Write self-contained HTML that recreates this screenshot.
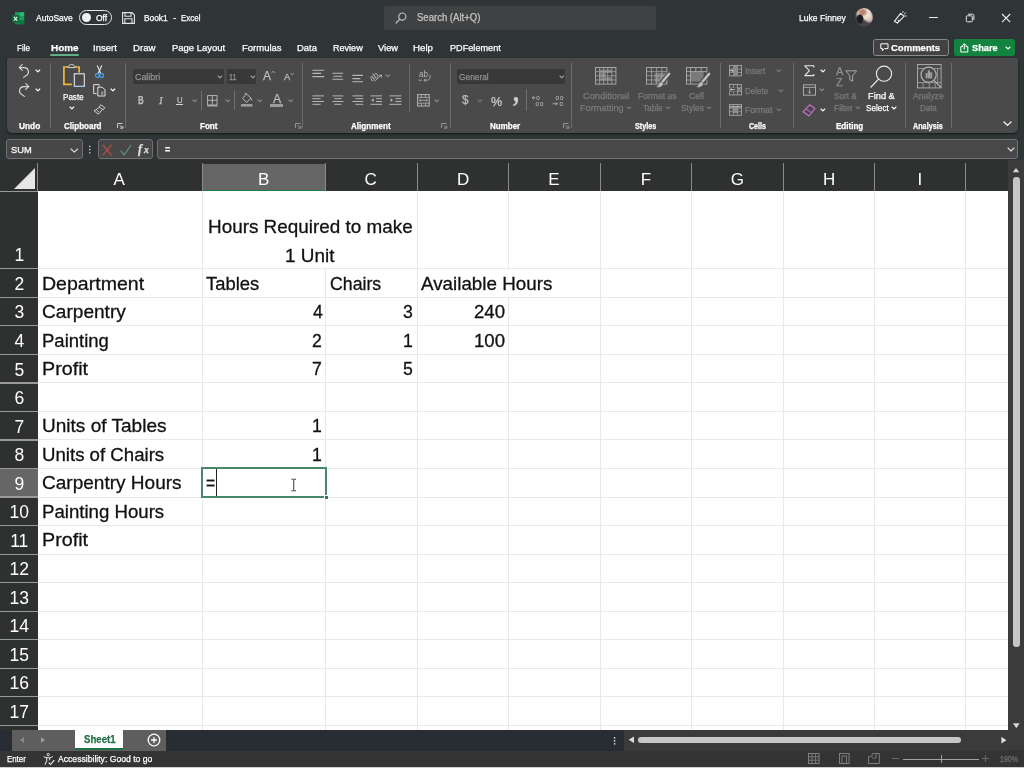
<!DOCTYPE html>
<html lang="en"><head><meta charset="utf-8"><title>Book1 - Excel</title>
<style>
html,body{margin:0;padding:0;}
body{width:1024px;height:768px;overflow:hidden;position:relative;background:#2f3436;font-family:"Liberation Sans",sans-serif;}
div,span.t,svg{position:absolute;box-sizing:border-box;}
span.t{will-change:opacity;white-space:nowrap;line-height:1;transform-origin:0 0;}
header span.t,nav span.t,section span.t,footer span.t{-webkit-text-stroke:0.25px currentColor;}
main span.c{-webkit-text-stroke:0.3px currentColor;}
svg{overflow:visible;}
</style></head><body>
<header id="titlebar"><svg style="left:11px;top:11.8px;" width="14" height="13" viewBox="0 0 14 13"><rect x="4" y="0.3" width="9.2" height="12" rx="0.8" fill="#16844a"/><rect x="8.6" y="0.3" width="4.6" height="4" fill="#33b877"/><rect x="8.6" y="4.3" width="4.6" height="4" fill="#1f9c5c"/><rect x="8.6" y="8.3" width="4.6" height="4" fill="#0f7a40"/><rect x="4" y="0.3" width="4.6" height="4" fill="#1f9c5c"/><rect x="1.2" y="3" width="7" height="7.4" rx="0.7" fill="#0e6e3a"/><path d="M3 4.8l3.2 3.8M6.2 4.8l-3.2 3.8" stroke="#e8f5ee" stroke-width="1.1"/></svg><span class="t" style="left:36.30px;top:14px;font-size:9.3px;color:#ffffff;transform:scaleX(0.9128);">AutoSave</span><div style="left:78.8px;top:10px;width:33.5px;height:14.8px;border:1.2px solid #e8e8e8;border-radius:7.4px;"></div><div style="left:81.6px;top:12.8px;width:9.2px;height:9.2px;background:#f2f2f2;border-radius:50%;"></div><span class="t" style="left:96.00px;top:14px;font-size:9px;color:#ffffff;transform:scaleX(0.9428);">Off</span><svg style="left:122px;top:12px;" width="13" height="12" viewBox="0 0 13 12"><path d="M0.6 0.6h9.4l2.4 2.2v8.6h-11.8z" fill="none" stroke="#e4e4e4" stroke-width="1.1"/><path d="M3 0.8v3.4h6v-3.4M2.8 11.2v-4.4h7.2v4.4" fill="none" stroke="#e4e4e4" stroke-width="1.1"/></svg><span class="t" style="left:143.80px;top:14px;font-size:9.3px;color:#ffffff;transform:scaleX(0.8989);">Book1</span><span class="t" style="left:172.70px;top:14px;font-size:9.3px;color:#ffffff;transform:scaleX(1.0592);">-</span><span class="t" style="left:181.00px;top:14px;font-size:9.3px;color:#ffffff;transform:scaleX(0.8576);">Excel</span><div style="left:383.8px;top:5.9px;width:272.4px;height:23.8px;background:#3f4142;border-radius:2px;"></div><svg style="left:395px;top:12px;" width="12" height="12" viewBox="0 0 12 12"><circle cx="7.3" cy="4.6" r="3.6" fill="none" stroke="#bdbdbd" stroke-width="1.2"/><path d="M4.7 7.2l-3.6 3.8" stroke="#bdbdbd" stroke-width="1.3" stroke-linecap="round"/></svg><span class="t" style="left:417.00px;top:13px;font-size:10px;color:#c4c4c4;transform:scaleX(0.9533);">Search (Alt+Q)</span><span class="t" style="left:799.20px;top:14px;font-size:9.3px;color:#ffffff;transform:scaleX(0.9253);">Luke Finney</span><div style="left:855px;top:8.2px;width:18px;height:18.6px;border-radius:50%;background:radial-gradient(ellipse 22% 28% at 28% 58%,#1d1d20 0 70%,rgba(29,29,32,0) 100%),radial-gradient(ellipse 30% 24% at 42% 22%,#b9826f 0 40%,rgba(185,130,111,0) 100%),radial-gradient(ellipse 52% 42% at 52% 28%,#eadfcd 0 62%,rgba(234,223,205,0) 100%),radial-gradient(ellipse 30% 30% at 78% 52%,#d8bcb4 0 50%,rgba(216,188,180,0) 100%),#4b414c;"></div><svg style="left:892.5px;top:11px;" width="14" height="13" viewBox="0 0 14 13"><path d="M1.4 10.4l6.2-8 3.6 2.8-6.6 6.6z" fill="none" stroke="#ececec" stroke-width="1.1" stroke-linejoin="round"/><path d="M3.2 11.4l1.4 0.9M9.6 1.6l0.5-1.1M11.4 2.8l1.2-0.9M12 5l1.4 0" fill="none" stroke="#ececec" stroke-width="0.9" stroke-linecap="round"/><circle cx="5.6" cy="9.6" r="0.8" fill="#ececec"/></svg><div style="left:929.3px;top:17px;width:9px;height:1px;background:#e8e8e8;"></div><svg style="left:965px;top:13px;" width="10" height="10" viewBox="0 0 10 10"><rect x="1.3" y="2.8" width="6" height="6" rx="1" fill="none" stroke="#e8e8e8" stroke-width="1"/><path d="M3 1.2h4.6a1.3 1.3 0 0 1 1.3 1.3v4.6" fill="none" stroke="#e8e8e8" stroke-width="1"/></svg><svg style="left:1001px;top:13px;" width="10" height="10" viewBox="0 0 10 10"><path d="M1 1l8.2 8.2M9.2 1l-8.2 8.2" stroke="#f0f0f0" stroke-width="1.1"/></svg></header>
<nav id="tabs"><span class="t" style="left:16.90px;top:44px;font-size:9.3px;color:#ffffff;transform:scaleX(0.8749);">File</span><span class="t" style="left:93.10px;top:44px;font-size:9.3px;color:#ffffff;transform:scaleX(1.0237);">Insert</span><span class="t" style="left:132.70px;top:44px;font-size:9.3px;color:#ffffff;transform:scaleX(1.0361);">Draw</span><span class="t" style="left:171.80px;top:44px;font-size:9.3px;color:#ffffff;transform:scaleX(1.0188);">Page Layout</span><span class="t" style="left:241.50px;top:44px;font-size:9.3px;color:#ffffff;transform:scaleX(1.0211);">Formulas</span><span class="t" style="left:296.80px;top:44px;font-size:9.3px;color:#ffffff;transform:scaleX(1.0117);">Data</span><span class="t" style="left:333.00px;top:44px;font-size:9.3px;color:#ffffff;transform:scaleX(0.9736);">Review</span><span class="t" style="left:377.80px;top:44px;font-size:9.3px;color:#ffffff;transform:scaleX(1.0053);">View</span><span class="t" style="left:413.10px;top:44px;font-size:9.3px;color:#ffffff;transform:scaleX(1.0413);">Help</span><span class="t" style="left:449.60px;top:44px;font-size:9.3px;color:#ffffff;transform:scaleX(0.9824);">PDFelement</span><span class="t" style="left:50.60px;top:44px;font-size:9.3px;color:#ffffff;transform:scaleX(1.0637);font-weight:bold;">Home</span><div style="left:50px;top:54.3px;width:28.8px;height:1.4px;background:#5fae88;border-radius:1px;"></div><div style="left:873px;top:38.7px;width:75.5px;height:17.6px;background:#424242;border:1px solid #8a8a8a;border-radius:2.5px;"></div><svg style="left:879.5px;top:43px;" width="9" height="9" viewBox="0 0 9 9"><path d="M0.8 0.8h7.2v4.8h-3.6l-2 2v-2h-1.6z" fill="none" stroke="#fff" stroke-width="1" stroke-linejoin="round"/></svg><span class="t" style="left:891.30px;top:44px;font-size:9.3px;color:#ffffff;transform:scaleX(1.0233);font-weight:bold;">Comments</span><div style="left:953.9px;top:38.7px;width:61.6px;height:17.6px;background:#12843f;border-radius:2.5px;"></div><svg style="left:959.5px;top:42.5px;" width="9" height="10" viewBox="0 0 9 10"><path d="M2.6 3.6h-1.8v5.4h7v-5.4h-1.8M4.3 6.2v-5.2M2.4 2.6l1.9-1.9 1.9 1.9" fill="none" stroke="#fff" stroke-width="1" stroke-linejoin="round" stroke-linecap="round"/></svg><span class="t" style="left:972.00px;top:44px;font-size:9.3px;color:#ffffff;transform:scaleX(0.9940);font-weight:bold;">Share</span><svg style="left:1005.0px;top:45.6px;" width="6" height="4" viewBox="0 0 6 4"><path d="M1 1l2.0 2 2.0 -2" fill="none" stroke="#ffffff" stroke-width="1.1" stroke-linecap="round" stroke-linejoin="round"/></svg></nav>
<section id="ribbon"><div style="left:7px;top:58.2px;width:1011px;height:74.4px;background:#4a4a4a;border-radius:2px 2px 5px 5px;box-shadow:0 1px 2px rgba(0,0,0,0.55);"></div><div style="left:50.1px;top:63px;width:1px;height:65px;background:#6c6c6c;"></div><div style="left:124.9px;top:63px;width:1px;height:65px;background:#6c6c6c;"></div><div style="left:302.0px;top:63px;width:1px;height:65px;background:#6c6c6c;"></div><div style="left:449.8px;top:63px;width:1px;height:65px;background:#6c6c6c;"></div><div style="left:571.1px;top:63px;width:1px;height:65px;background:#6c6c6c;"></div><div style="left:719.5px;top:63px;width:1px;height:65px;background:#6c6c6c;"></div><div style="left:793.2px;top:63px;width:1px;height:65px;background:#6c6c6c;"></div><div style="left:904.9px;top:63px;width:1px;height:65px;background:#6c6c6c;"></div><div style="left:950.7px;top:63px;width:1px;height:65px;background:#6c6c6c;"></div><svg style="left:18px;top:63.6px;" width="12" height="14" viewBox="0 0 12 14"><path d="M1.2 3.6h5.2a4.2 4.2 0 0 1 2.6 7.4l-3.4 2.4M1.2 3.6l3-3M1.2 3.6l3.2 2.8" fill="none" stroke="#d6d6d6" stroke-width="1.15" stroke-linecap="round" stroke-linejoin="round"/></svg><svg style="left:18px;top:83.4px;" width="12" height="14" viewBox="0 0 12 14"><g transform="translate(12,0) scale(-1,1)"><path d="M1.2 3.6h5.2a4.2 4.2 0 0 1 2.6 7.4l-3.4 2.4M1.2 3.6l3-3M1.2 3.6l3.2 2.8" fill="none" stroke="#d6d6d6" stroke-width="1.15" stroke-linecap="round" stroke-linejoin="round"/></g></svg><svg style="left:34.9px;top:68.64999999999999px;" width="5.8" height="3.9" viewBox="0 0 5.8 3.9"><path d="M1 1l1.9 1.9 1.9 -1.9" fill="none" stroke="#ffffff" stroke-width="1.1" stroke-linecap="round" stroke-linejoin="round"/></svg><svg style="left:34.9px;top:88.05px;" width="5.8" height="3.9" viewBox="0 0 5.8 3.9"><path d="M1 1l1.9 1.9 1.9 -1.9" fill="none" stroke="#ffffff" stroke-width="1.1" stroke-linecap="round" stroke-linejoin="round"/></svg><span class="t" style="left:19.00px;top:122px;font-size:8.3px;color:#ffffff;transform:scaleX(1.0021);font-weight:bold;">Undo</span><svg style="left:63.2px;top:64.3px;" width="23" height="24" viewBox="0 0 23 24"><path d="M5.5 3h-4.6v17.3h8" fill="none" stroke="#f0b63c" stroke-width="1.7"/><path d="M11.5 3h4.6v5.5" fill="none" stroke="#f0b63c" stroke-width="1.7"/><path d="M5.2 3.6c0-2 1.6-3 3.4-3s3.4 1 3.4 3z" fill="none" stroke="#d8d8d8" stroke-width="1"/><rect x="11.3" y="9.8" width="10" height="12.6" fill="#4a4a4a" stroke="#e6e6e6" stroke-width="1.1"/><path d="M11.3 22.4h10" stroke="#9cc3e6" stroke-width="1.1"/></svg><span class="t" style="left:62.50px;top:93px;font-size:9.3px;color:#ffffff;transform:scaleX(0.8669);">Paste</span><svg style="left:69.3px;top:106.05px;" width="5.8" height="3.9" viewBox="0 0 5.8 3.9"><path d="M1 1l1.9 1.9 1.9 -1.9" fill="none" stroke="#ffffff" stroke-width="1.1" stroke-linecap="round" stroke-linejoin="round"/></svg><svg style="left:95px;top:64.5px;" width="9" height="13" viewBox="0 0 9 13"><path d="M2.2 0.6l3.6 8M6.8 0.6l-3.6 8" stroke="#e6e6e6" stroke-width="1.1" fill="none"/><circle cx="2.4" cy="10.4" r="1.9" fill="none" stroke="#4f9be0" stroke-width="1.3"/><circle cx="6.6" cy="10.4" r="1.9" fill="none" stroke="#4f9be0" stroke-width="1.3"/></svg><svg style="left:92.5px;top:84px;" width="13" height="13" viewBox="0 0 13 13"><path d="M3.6 9.6h-2.9v-9h5.4v1.8" fill="none" stroke="#e0e0e0" stroke-width="1"/><path d="M4.8 3.2h4.6l2.6 2.6v6.2h-7.2z" fill="none" stroke="#e0e0e0" stroke-width="1"/><path d="M8 8.2h2.4M8 10h2.4" stroke="#e0e0e0" stroke-width="0.8"/></svg><svg style="left:109.89999999999999px;top:88.05px;" width="5.8" height="3.9" viewBox="0 0 5.8 3.9"><path d="M1 1l1.9 1.9 1.9 -1.9" fill="none" stroke="#ffffff" stroke-width="1.1" stroke-linecap="round" stroke-linejoin="round"/></svg><svg style="left:93px;top:104px;" width="13" height="11" viewBox="0 0 13 11"><path d="M7.6 0.8l4.2 2.8-1.6 2.2-4.2-2.8z M6.6 3.4l-5.6 3.4 4.4 3.4 4-4.6" fill="none" stroke="#cfcfcf" stroke-width="1" stroke-linejoin="round"/><path d="M3.4 6l3 2.2" stroke="#cfcfcf" stroke-width="0.8"/></svg><span class="t" style="left:63.50px;top:122px;font-size:8.3px;color:#ffffff;transform:scaleX(0.9685);font-weight:bold;">Clipboard</span><svg style="left:116.8px;top:123px;" width="7" height="6" viewBox="0 0 7 6"><path d="M0.5 0.5h5M0.5 0.5v4.5" fill="none" stroke="#d6d6d6" stroke-width="0.9"/><path d="M2.6 2.4l3 2.6M5.8 2.8v2.4h-2.6" fill="none" stroke="#d6d6d6" stroke-width="0.9"/></svg><div style="left:132.5px;top:69px;width:91.3px;height:15.2px;background:#383838;border-radius:2px;"></div><span class="t" style="left:134.80px;top:72px;font-size:9.5px;color:#929292;transform:scaleX(0.9357);">Calibri</span><svg style="left:216.7px;top:74.85px;" width="5.8" height="3.9" viewBox="0 0 5.8 3.9"><path d="M1 1l1.9 1.9 1.9 -1.9" fill="none" stroke="#9c9c9c" stroke-width="1.1" stroke-linecap="round" stroke-linejoin="round"/></svg><div style="left:226.9px;top:69px;width:29.4px;height:15.2px;background:#383838;border-radius:2px;"></div><span class="t" style="left:229.00px;top:72px;font-size:9.5px;color:#929292;transform:scaleX(0.7692);">11</span><svg style="left:249.5px;top:74.85px;" width="5.8" height="3.9" viewBox="0 0 5.8 3.9"><path d="M1 1l1.9 1.9 1.9 -1.9" fill="none" stroke="#9c9c9c" stroke-width="1.1" stroke-linecap="round" stroke-linejoin="round"/></svg><span class="t" style="left:263.10px;top:70px;font-size:12.6px;color:#bdbdbd;transform:scaleX(0.9595);">A</span><svg style="left:271px;top:69.5px;" width="5" height="4" viewBox="0 0 5 4"><path d="M0.6 3l1.6-2 1.6 2" fill="none" stroke="#aaa" stroke-width="0.8"/></svg><span class="t" style="left:283.80px;top:72px;font-size:9.8px;color:#bdbdbd;transform:scaleX(0.9443);">A</span><svg style="left:289.6px;top:71.5px;" width="5" height="4" viewBox="0 0 5 4"><path d="M0.6 1l1.6 2 1.6-2" fill="none" stroke="#aaa" stroke-width="0.8"/></svg><span class="t" style="left:138.10px;top:96px;font-size:10.4px;color:#bdbdbd;transform:scaleX(0.7612);font-weight:bold;">B</span><span class="t" style="left:158.66px;top:96px;font-size:10.6px;color:#bdbdbd;transform:scaleX(1.0427);font-style:italic;font-family:'Liberation Serif',serif;">I</span><span class="t" style="left:176.60px;top:95px;font-size:9.6px;color:#bdbdbd;transform:scaleX(0.8102);">U</span><div style="left:176.2px;top:104.3px;width:6.4px;height:0.9px;background:#d6d6d6;"></div><svg style="left:191.6px;top:98.75px;" width="5.6" height="3.7" viewBox="0 0 5.6 3.7"><path d="M1 1l1.8 1.7 1.8 -1.7" fill="none" stroke="#8e8e8e" stroke-width="1.1" stroke-linecap="round" stroke-linejoin="round"/></svg><div style="left:201px;top:91px;width:1px;height:18.6px;background:#707070;"></div><svg style="left:207.3px;top:94.5px;" width="11" height="12" viewBox="0 0 11 12"><rect x="0.6" y="0.6" width="9.4" height="9.4" fill="none" stroke="#bdbdbd" stroke-width="0.9"/><path d="M5.3 0.6v9.4M0.6 5.3h9.4" stroke="#bdbdbd" stroke-width="0.9"/><path d="M0.2 10.9h10.2" stroke="#c4c4c4" stroke-width="1"/></svg><svg style="left:224.7px;top:98.75px;" width="5.6" height="3.7" viewBox="0 0 5.6 3.7"><path d="M1 1l1.8 1.7 1.8 -1.7" fill="none" stroke="#8e8e8e" stroke-width="1.1" stroke-linecap="round" stroke-linejoin="round"/></svg><div style="left:233.9px;top:91px;width:1px;height:18.6px;background:#707070;"></div><svg style="left:240.5px;top:93px;" width="12" height="14" viewBox="0 0 12 14"><path d="M5.4 0.8l4.6 4.4-4.4 4.2-4-4z M5.4 0.8l-1.6-0.4M10 5.2l1 2.2" fill="none" stroke="#bcbcbc" stroke-width="1" stroke-linejoin="round"/><rect x="0" y="11" width="11.4" height="2.6" fill="#9c9c9c"/></svg><svg style="left:257.2px;top:98.75px;" width="5.6" height="3.7" viewBox="0 0 5.6 3.7"><path d="M1 1l1.8 1.7 1.8 -1.7" fill="none" stroke="#8e8e8e" stroke-width="1.1" stroke-linecap="round" stroke-linejoin="round"/></svg><span class="t" style="left:272.80px;top:93px;font-size:12px;color:#bdbdbd;transform:scaleX(1.0199);">A</span><div style="left:270px;top:104px;width:12.5px;height:2.6px;background:#9c9c9c;"></div><svg style="left:288.2px;top:98.75px;" width="5.6" height="3.7" viewBox="0 0 5.6 3.7"><path d="M1 1l1.8 1.7 1.8 -1.7" fill="none" stroke="#8e8e8e" stroke-width="1.1" stroke-linecap="round" stroke-linejoin="round"/></svg><span class="t" style="left:200.00px;top:122px;font-size:8.3px;color:#ffffff;transform:scaleX(0.9739);font-weight:bold;">Font</span><svg style="left:294.5px;top:122.5px;" width="7" height="6" viewBox="0 0 7 6"><path d="M0.5 0.5h5M0.5 0.5v4.5" fill="none" stroke="#9a9a9a" stroke-width="0.9"/><path d="M2.6 2.4l3 2.6M5.8 2.8v2.4h-2.6" fill="none" stroke="#9a9a9a" stroke-width="0.9"/></svg><svg style="left:311.5px;top:69px;" width="13" height="10" viewBox="0 0 13 10"><path d="M0.4 1.2H12.2M0.4 4.4H9.2M0.4 7.6H12.2" stroke="#b6b6b6" stroke-width="1.1" fill="none"/></svg><svg style="left:331.5px;top:71.6px;" width="12" height="9" viewBox="0 0 12 9"><path d="M0.4 1.2H11.2M1.4 4.2H10.2M0.4 7.2H11.2" stroke="#b6b6b6" stroke-width="1.1" fill="none"/></svg><svg style="left:351.5px;top:74.2px;" width="12" height="10" viewBox="0 0 12 10"><path d="M0.4 1.4H11M0.4 4.6H8.4M0.4 7.8H11" stroke="#b6b6b6" stroke-width="1.1" fill="none"/></svg><svg style="left:369px;top:69.5px;" width="15" height="12" viewBox="0 0 15 12"><text x="0.5" y="9.2" font-size="8.4" fill="#b8b8b8" font-family="Liberation Sans,sans-serif" transform="rotate(-38 5 7)">ab</text><path d="M5.4 11.4l7-6.4M12.6 5l-2.8 0.4M12.6 5l-0.4 2.6" stroke="#b8b8b8" stroke-width="0.9" fill="none"/></svg><svg style="left:385.2px;top:74.35000000000001px;" width="5.6" height="3.7" viewBox="0 0 5.6 3.7"><path d="M1 1l1.8 1.7 1.8 -1.7" fill="none" stroke="#8e8e8e" stroke-width="1.1" stroke-linecap="round" stroke-linejoin="round"/></svg><svg style="left:311.5px;top:95px;" width="13" height="11" viewBox="0 0 13 11"><path d="M0.4 0.9H12M0.4 3.7H8.6M0.4 6.5H12M0.4 9.3H8.6" stroke="#b6b6b6" stroke-width="1" fill="none"/></svg><svg style="left:331.5px;top:95px;" width="12" height="11" viewBox="0 0 12 11"><path d="M0.4 0.9H11.4M2.2 3.7H9.6M0.4 6.5H11.4M2.2 9.3H9.6" stroke="#b6b6b6" stroke-width="1" fill="none"/></svg><svg style="left:351.5px;top:95px;" width="12" height="11" viewBox="0 0 12 11"><path d="M0.4 0.9H11.2M3.4 3.7H11.2M0.4 6.5H11.2M3.4 9.3H11.2" stroke="#b6b6b6" stroke-width="1" fill="none"/></svg><svg style="left:369.6px;top:95px;" width="13" height="11" viewBox="0 0 13 11"><path d="M0.4 0.9H12M6 3.7H12M6 6.5H12M0.4 9.3H12" stroke="#b6b6b6" stroke-width="1" fill="none"/><path d="M3.6 3.2l-2.4 1.9 2.4 1.9z" fill="#bdbdbd"/></svg><svg style="left:389.2px;top:95px;" width="13" height="11" viewBox="0 0 13 11"><path d="M0.4 0.9H12.4M6.4 3.7H12.4M6.4 6.5H12.4M0.4 9.3H12.4" stroke="#b6b6b6" stroke-width="1" fill="none"/><path d="M1.6 3.2l2.4 1.9-2.4 1.9z" fill="#bdbdbd"/></svg><div style="left:409.1px;top:64px;width:1px;height:47.6px;background:#6c6c6c;"></div><svg style="left:418px;top:70px;" width="13" height="12" viewBox="0 0 13 12"><text x="1" y="7.2" font-size="8.2" fill="#b8b8b8" font-family="Liberation Sans,sans-serif">ab</text><path d="M0.6 10.2h3M11.4 4.6c1.6 2.6 0.4 5.6-3 5.6h-2.2M7.6 8.6l-1.6 1.6 1.6 1.6" stroke="#b8b8b8" stroke-width="0.9" fill="none"/></svg><svg style="left:416.6px;top:94px;" width="13" height="13" viewBox="0 0 13 13"><rect x="0.6" y="0.6" width="11.6" height="11.4" fill="none" stroke="#b4b4b4" stroke-width="1"/><path d="M0.6 3.4h11.6M0.6 9.2h11.6M4.4 0.6v2.8M8.4 0.6v2.8M4.4 9.2v2.8M8.4 9.2v2.8" stroke="#b4b4b4" stroke-width="0.8"/><path d="M2.4 6.3h8M4 4.9l-1.6 1.4 1.6 1.4M8.8 4.9l1.6 1.4-1.6 1.4" stroke="#b4b4b4" stroke-width="0.8" fill="none"/></svg><svg style="left:434.4px;top:98.75px;" width="5.6" height="3.7" viewBox="0 0 5.6 3.7"><path d="M1 1l1.8 1.7 1.8 -1.7" fill="none" stroke="#8e8e8e" stroke-width="1.1" stroke-linecap="round" stroke-linejoin="round"/></svg><span class="t" style="left:351.00px;top:122px;font-size:8.3px;color:#ffffff;transform:scaleX(0.9757);font-weight:bold;">Alignment</span><svg style="left:441px;top:123px;" width="7" height="6" viewBox="0 0 7 6"><path d="M0.5 0.5h5M0.5 0.5v4.5" fill="none" stroke="#9a9a9a" stroke-width="0.9"/><path d="M2.6 2.4l3 2.6M5.8 2.8v2.4h-2.6" fill="none" stroke="#9a9a9a" stroke-width="0.9"/></svg><div style="left:456.6px;top:68.6px;width:108.2px;height:15.5px;background:#383838;border-radius:2px;"></div><span class="t" style="left:458.50px;top:72px;font-size:9.5px;color:#929292;transform:scaleX(0.8782);">General</span><svg style="left:558.6px;top:74.89999999999999px;" width="5.6" height="3.8" viewBox="0 0 5.6 3.8"><path d="M1 1l1.8 1.8 1.8 -1.8" fill="none" stroke="#9c9c9c" stroke-width="1.1" stroke-linecap="round" stroke-linejoin="round"/></svg><span class="t" style="left:462.00px;top:94px;font-size:12.4px;color:#bcbcbc;transform:scaleX(0.9445);">$</span><svg style="left:476.59999999999997px;top:98.75px;" width="5.6" height="3.7" viewBox="0 0 5.6 3.7"><path d="M1 1l1.8 1.7 1.8 -1.7" fill="none" stroke="#7c7c7c" stroke-width="1.1" stroke-linecap="round" stroke-linejoin="round"/></svg><span class="t" style="left:491.00px;top:95px;font-size:13.6px;color:#cfcfcf;transform:scaleX(0.9253);">%</span><span class="t" style="left:513.00px;top:77px;font-size:29px;color:#cfcfcf;transform:scaleX(0.8276);font-weight:bold;font-family:'Liberation Serif',serif;">,</span><div style="left:525.5px;top:89px;width:1px;height:22px;background:#707070;"></div><svg style="left:531.5px;top:94.5px;" width="13" height="12" viewBox="0 0 13 12"><text x="4.2" y="5.4" font-size="6.2" fill="#c6c6c6" font-family="Liberation Sans,sans-serif">0</text><text x="3.4" y="11.4" font-size="6.2" fill="#c6c6c6" font-family="Liberation Sans,sans-serif" textLength="8">00</text><path d="M0.4 2.8h3M1.6 1.4l-1.4 1.4 1.4 1.4" stroke="#c6c6c6" stroke-width="0.8" fill="none"/></svg><svg style="left:552px;top:94.5px;" width="13" height="12" viewBox="0 0 13 12"><text x="3.4" y="5.4" font-size="6.2" fill="#c6c6c6" font-family="Liberation Sans,sans-serif" textLength="8">00</text><text x="7.4" y="11.4" font-size="6.2" fill="#c6c6c6" font-family="Liberation Sans,sans-serif">0</text><path d="M0.6 8.8h4.6M3.8 7.4l1.4 1.4-1.4 1.4" stroke="#c6c6c6" stroke-width="0.8" fill="none"/></svg><span class="t" style="left:489.80px;top:122px;font-size:8.3px;color:#ffffff;transform:scaleX(0.9626);font-weight:bold;">Number</span><svg style="left:562.8px;top:123px;" width="7" height="6" viewBox="0 0 7 6"><path d="M0.5 0.5h5M0.5 0.5v4.5" fill="none" stroke="#9a9a9a" stroke-width="0.9"/><path d="M2.6 2.4l3 2.6M5.8 2.8v2.4h-2.6" fill="none" stroke="#9a9a9a" stroke-width="0.9"/></svg><svg style="left:595.2px;top:66.8px;" width="22" height="18" viewBox="0 0 22 18"><rect x="4.5" y="2.6" width="12" height="11" fill="#7a7a7a"/><rect x="11" y="6" width="5" height="4" fill="#3c3c3c"/><rect x="0.5" y="0.5" width="20.4" height="16.6" fill="none" stroke="#a6a6a6" stroke-width="1"/><path d="M4.58 0.5v16.6" stroke="#a6a6a6" stroke-width="0.8"/><path d="M8.66 0.5v16.6" stroke="#a6a6a6" stroke-width="0.8"/><path d="M12.74 0.5v16.6" stroke="#a6a6a6" stroke-width="0.8"/><path d="M16.82 0.5v16.6" stroke="#a6a6a6" stroke-width="0.8"/><path d="M0.5 4.65h20.4" stroke="#a6a6a6" stroke-width="0.8"/><path d="M0.5 8.80h20.4" stroke="#a6a6a6" stroke-width="0.8"/><path d="M0.5 12.95h20.4" stroke="#a6a6a6" stroke-width="0.8"/></svg><svg style="left:645.5px;top:66.8px;" width="25" height="22" viewBox="0 0 25 22"><rect x="8.6" y="6" width="12" height="9.6" fill="#7a7a7a"/><rect x="0.5" y="0.5" width="20.4" height="16.6" fill="none" stroke="#a6a6a6" stroke-width="1"/><path d="M5.60 0.5v16.6" stroke="#a6a6a6" stroke-width="0.8"/><path d="M10.70 0.5v16.6" stroke="#a6a6a6" stroke-width="0.8"/><path d="M15.80 0.5v16.6" stroke="#a6a6a6" stroke-width="0.8"/><path d="M0.5 4.65h20.4" stroke="#a6a6a6" stroke-width="0.8"/><path d="M0.5 8.80h20.4" stroke="#a6a6a6" stroke-width="0.8"/><path d="M0.5 12.95h20.4" stroke="#a6a6a6" stroke-width="0.8"/><path d="M23.4 6.6l-8 9.4" stroke="#4a4a4a" stroke-width="4.6" stroke-linecap="round"/><path d="M23.2 6.8l-7.6 9" stroke="#c4c4c4" stroke-width="2.4" stroke-linecap="round"/><path d="M15.8 14.6c-2.6 0.2-3.2 2.2-3.6 3.4-0.4 1-1.4 1.6-2.6 1.8 2.4 1.2 6.4 0.8 7.6-2.2 0.4-1.2-0.2-2.4-1.4-3z" fill="#bcbcbc" stroke="#4a4a4a" stroke-width="0.6"/></svg><svg style="left:686px;top:66.8px;" width="25" height="22" viewBox="0 0 25 22"><rect x="4.6" y="4.6" width="13" height="10" fill="#7a7a7a"/><rect x="0.5" y="0.5" width="20.4" height="16.6" fill="none" stroke="#a6a6a6" stroke-width="1"/><path d="M0.5 4.6h20.4M4.6 0.5v16.6M0.5 8.8h4M0.5 13h4M9.8 0.5v4M15.2 0.5v4" stroke="#b4b4b4" stroke-width="0.8"/><path d="M23.4 6.6l-8 9.4" stroke="#4a4a4a" stroke-width="4.6" stroke-linecap="round"/><path d="M23.2 6.8l-7.6 9" stroke="#c4c4c4" stroke-width="2.4" stroke-linecap="round"/><path d="M15.8 14.6c-2.6 0.2-3.2 2.2-3.6 3.4-0.4 1-1.4 1.6-2.6 1.8 2.4 1.2 6.4 0.8 7.6-2.2 0.4-1.2-0.2-2.4-1.4-3z" fill="#bcbcbc" stroke="#4a4a4a" stroke-width="0.6"/></svg><span class="t" style="left:582.90px;top:92px;font-size:9.2px;color:#7b7b7b;transform:scaleX(1.0077);">Conditional</span><span class="t" style="left:579.80px;top:104px;font-size:9.2px;color:#7b7b7b;transform:scaleX(0.9937);">Formatting</span><svg style="left:626.2px;top:106.05000000000001px;" width="5.6" height="3.7" viewBox="0 0 5.6 3.7"><path d="M1 1l1.8 1.7 1.8 -1.7" fill="none" stroke="#7b7b7b" stroke-width="1.1" stroke-linecap="round" stroke-linejoin="round"/></svg><span class="t" style="left:637.50px;top:92px;font-size:9.2px;color:#7b7b7b;transform:scaleX(0.9300);">Format as</span><span class="t" style="left:643.30px;top:104px;font-size:9.2px;color:#7b7b7b;transform:scaleX(0.8914);">Table</span><svg style="left:664.8000000000001px;top:106.05000000000001px;" width="5.6" height="3.7" viewBox="0 0 5.6 3.7"><path d="M1 1l1.8 1.7 1.8 -1.7" fill="none" stroke="#7b7b7b" stroke-width="1.1" stroke-linecap="round" stroke-linejoin="round"/></svg><span class="t" style="left:689.40px;top:92px;font-size:9.2px;color:#7b7b7b;transform:scaleX(0.9389);">Cell</span><span class="t" style="left:680.80px;top:104px;font-size:9.2px;color:#7b7b7b;transform:scaleX(0.9174);">Styles</span><svg style="left:705.8000000000001px;top:106.05000000000001px;" width="5.6" height="3.7" viewBox="0 0 5.6 3.7"><path d="M1 1l1.8 1.7 1.8 -1.7" fill="none" stroke="#7b7b7b" stroke-width="1.1" stroke-linecap="round" stroke-linejoin="round"/></svg><span class="t" style="left:635.00px;top:122px;font-size:8.3px;color:#ffffff;transform:scaleX(0.8714);font-weight:bold;">Styles</span><svg style="left:729px;top:64.8px;" width="14" height="12" viewBox="0 0 14 12"><rect x="0.5" y="0.5" width="12" height="10.4" fill="none" stroke="#9c9c9c" stroke-width="1"/><path d="M4.50 0.5v10.4" stroke="#9c9c9c" stroke-width="0.8"/><path d="M8.50 0.5v10.4" stroke="#9c9c9c" stroke-width="0.8"/><path d="M0.5 3.97h12" stroke="#9c9c9c" stroke-width="0.8"/><path d="M0.5 7.43h12" stroke="#9c9c9c" stroke-width="0.8"/><rect x="4.6" y="0.8" width="3.8" height="9.8" fill="#8a8a8a"/><path d="M0.2 5.6h4M2.8 4.2l1.4 1.4-1.4 1.4" stroke="#d0d0d0" stroke-width="0.8" fill="none"/></svg><svg style="left:729px;top:84px;" width="14" height="12" viewBox="0 0 14 12"><rect x="0.5" y="0.5" width="12" height="10.4" fill="none" stroke="#9c9c9c" stroke-width="1"/><path d="M4.50 0.5v10.4" stroke="#9c9c9c" stroke-width="0.8"/><path d="M8.50 0.5v10.4" stroke="#9c9c9c" stroke-width="0.8"/><path d="M0.5 3.97h12" stroke="#9c9c9c" stroke-width="0.8"/><path d="M0.5 7.43h12" stroke="#9c9c9c" stroke-width="0.8"/><rect x="0.4" y="3.8" width="7.6" height="3.6" fill="#4a4a4a"/><path d="M1 5.6h5M2.6 4.2l-1.4 1.4 1.4 1.4" stroke="#d0d0d0" stroke-width="0.8" fill="none"/><path d="M8.8 3.4l3 3.8M11.8 3.4l-3 3.8" stroke="#b8b8b8" stroke-width="0.8"/></svg><svg style="left:729px;top:104.4px;" width="14" height="12" viewBox="0 0 14 12"><rect x="0.5" y="0.5" width="12" height="10.8" fill="none" stroke="#9c9c9c" stroke-width="1"/><path d="M4.50 0.5v10.8" stroke="#9c9c9c" stroke-width="0.8"/><path d="M8.50 0.5v10.8" stroke="#9c9c9c" stroke-width="0.8"/><path d="M0.5 4.10h12" stroke="#9c9c9c" stroke-width="0.8"/><path d="M0.5 7.70h12" stroke="#9c9c9c" stroke-width="0.8"/><rect x="3.4" y="4" width="6" height="5" fill="#8c8c8c"/><path d="M0.5 2.8h12" stroke="#cfcfcf" stroke-width="1"/></svg><span class="t" style="left:745.30px;top:67px;font-size:9.2px;color:#7b7b7b;transform:scaleX(0.8826);">Insert</span><svg style="left:775.6px;top:69.15px;" width="5.6" height="3.7" viewBox="0 0 5.6 3.7"><path d="M1 1l1.8 1.7 1.8 -1.7" fill="none" stroke="#7b7b7b" stroke-width="1.1" stroke-linecap="round" stroke-linejoin="round"/></svg><span class="t" style="left:745.30px;top:87px;font-size:9.2px;color:#7b7b7b;transform:scaleX(0.8688);">Delete</span><svg style="left:777.6px;top:89.15px;" width="5.6" height="3.7" viewBox="0 0 5.6 3.7"><path d="M1 1l1.8 1.7 1.8 -1.7" fill="none" stroke="#7b7b7b" stroke-width="1.1" stroke-linecap="round" stroke-linejoin="round"/></svg><span class="t" style="left:745.30px;top:106px;font-size:9.2px;color:#7b7b7b;transform:scaleX(0.9376);">Format</span><svg style="left:775.6px;top:107.55000000000001px;" width="5.6" height="3.7" viewBox="0 0 5.6 3.7"><path d="M1 1l1.8 1.7 1.8 -1.7" fill="none" stroke="#7b7b7b" stroke-width="1.1" stroke-linecap="round" stroke-linejoin="round"/></svg><span class="t" style="left:748.70px;top:122px;font-size:8.3px;color:#ffffff;transform:scaleX(0.8519);font-weight:bold;">Cells</span><svg style="left:803.5px;top:65px;" width="11" height="12" viewBox="0 0 11 12"><path d="M9.8 2.4v-1.6h-9l4.6 4.8-4.6 5h9v-1.6" fill="none" stroke="#e8e8e8" stroke-width="1.1" stroke-linejoin="round"/></svg><svg style="left:819.9px;top:69.05px;" width="5.8" height="3.9" viewBox="0 0 5.8 3.9"><path d="M1 1l1.9 1.9 1.9 -1.9" fill="none" stroke="#ffffff" stroke-width="1.1" stroke-linecap="round" stroke-linejoin="round"/></svg><svg style="left:802.6px;top:84px;" width="13" height="12" viewBox="0 0 13 12"><rect x="0.5" y="0.8" width="12" height="10.4" fill="none" stroke="#a8a8a8" stroke-width="1"/><path d="M0.5 3.4h12" stroke="#a8a8a8" stroke-width="0.9"/><path d="M6.5 4.6v4.6M4.8 7.6l1.7 1.7 1.7-1.7" stroke="#a8a8a8" stroke-width="0.9" fill="none"/></svg><svg style="left:819.2px;top:88.35000000000001px;" width="5.6" height="3.7" viewBox="0 0 5.6 3.7"><path d="M1 1l1.8 1.7 1.8 -1.7" fill="none" stroke="#8a8a8a" stroke-width="1.1" stroke-linecap="round" stroke-linejoin="round"/></svg><svg style="left:802px;top:103.6px;" width="14" height="13" viewBox="0 0 14 13"><path d="M7.6 0.8l5.4 3.6-6 7.6-6-4.2z" fill="none" stroke="#c86fc6" stroke-width="1.2" stroke-linejoin="round"/><path d="M4 5l5.6 3.8" stroke="#c86fc6" stroke-width="1"/></svg><svg style="left:819.9px;top:108.25px;" width="5.8" height="3.9" viewBox="0 0 5.8 3.9"><path d="M1 1l1.9 1.9 1.9 -1.9" fill="none" stroke="#ffffff" stroke-width="1.1" stroke-linecap="round" stroke-linejoin="round"/></svg><span class="t" style="left:836.00px;top:66px;font-size:10.6px;color:#8e8e8e;transform:scaleX(1.0420);">A</span><span class="t" style="left:836.40px;top:77px;font-size:10.6px;color:#8e8e8e;transform:scaleX(1.0207);">Z</span><svg style="left:845px;top:70.4px;" width="13" height="13" viewBox="0 0 13 13"><path d="M0.8 0.8h10.8l-4 5v5.4l-2.8-1.4v-4z" fill="none" stroke="#a8a8a8" stroke-width="1" stroke-linejoin="round"/></svg><span class="t" style="left:834.30px;top:92px;font-size:9.2px;color:#7b7b7b;transform:scaleX(0.8876);">Sort &amp;</span><span class="t" style="left:833.50px;top:104px;font-size:9.2px;color:#7b7b7b;transform:scaleX(0.9205);">Filter</span><svg style="left:855.2px;top:106.05000000000001px;" width="5.6" height="3.7" viewBox="0 0 5.6 3.7"><path d="M1 1l1.8 1.7 1.8 -1.7" fill="none" stroke="#7b7b7b" stroke-width="1.1" stroke-linecap="round" stroke-linejoin="round"/></svg><svg style="left:869px;top:63.5px;" width="26" height="25" viewBox="0 0 26 25"><circle cx="15" cy="9.7" r="7.6" fill="none" stroke="#ececec" stroke-width="1.1"/><path d="M9.6 15.2l-7.6 7.8" stroke="#ececec" stroke-width="1.2" stroke-linecap="round"/></svg><span class="t" style="left:868.40px;top:92px;font-size:9.3px;color:#ffffff;transform:scaleX(0.9971);">Find &amp;</span><span class="t" style="left:865.90px;top:104px;font-size:9.3px;color:#ffffff;transform:scaleX(0.8819);">Select</span><svg style="left:891.0px;top:105.9px;" width="6" height="4" viewBox="0 0 6 4"><path d="M1 1l2.0 2 2.0 -2" fill="none" stroke="#ffffff" stroke-width="1.1" stroke-linecap="round" stroke-linejoin="round"/></svg><span class="t" style="left:835.90px;top:122px;font-size:8.3px;color:#ffffff;transform:scaleX(0.9703);font-weight:bold;">Editing</span><svg style="left:916.6px;top:63.8px;" width="25" height="25" viewBox="0 0 25 25"><rect x="0.5" y="0.5" width="23.6" height="23.4" fill="none" stroke="#a6a6a6" stroke-width="1"/><path d="M0.5 4.6h23.6M0.5 18.6h23.6M6 18.6v5.3M12.2 18.6v5.3M18.2 18.6v5.3M20.6 4.6v14" stroke="#a6a6a6" stroke-width="0.8"/><circle cx="11.6" cy="10.8" r="7.6" fill="#4a4a4a" stroke="#b4b4b4" stroke-width="1.2"/><path d="M17 16.4l7 7.2" stroke="#b4b4b4" stroke-width="1.2"/><rect x="8.6" y="9" width="2" height="5.4" fill="#a0a0a0"/><rect x="10.8" y="6.4" width="2.2" height="8" fill="#a0a0a0"/><rect x="13.2" y="8.4" width="2" height="6" fill="#a0a0a0"/></svg><span class="t" style="left:913.20px;top:92px;font-size:9.2px;color:#7b7b7b;transform:scaleX(0.9404);">Analyze</span><span class="t" style="left:920.30px;top:104px;font-size:9.2px;color:#7b7b7b;transform:scaleX(0.8634);">Data</span><span class="t" style="left:913.20px;top:122px;font-size:8.3px;color:#ffffff;transform:scaleX(0.8696);font-weight:bold;">Analysis</span><svg style="left:1002.5px;top:120.89999999999999px;" width="9" height="5.4" viewBox="0 0 9 5.4"><path d="M1 1l3.5 3.4 3.5 -3.4" fill="none" stroke="#ffffff" stroke-width="1.2" stroke-linecap="round" stroke-linejoin="round"/></svg></section>
<section id="formulabar"><div style="left:6px;top:139.3px;width:76.5px;height:19.3px;background:#474747;border:1px solid #707070;border-radius:3px;"></div><span class="t" style="left:11.30px;top:145px;font-size:9.6px;color:#ffffff;transform:scaleX(0.9713);">SUM</span><svg style="left:70.0px;top:147.6px;" width="8.6" height="5.2" viewBox="0 0 8.6 5.2"><path d="M1 1l3.3 3.2 3.3 -3.2" fill="none" stroke="#dcdcdc" stroke-width="1.1" stroke-linecap="round" stroke-linejoin="round"/></svg><svg style="left:88px;top:145px;" width="4" height="10" viewBox="0 0 4 10"><circle cx="1.8" cy="1.4" r="0.8" fill="#d0d0d0"/><circle cx="1.8" cy="4.6" r="0.8" fill="#d0d0d0"/><circle cx="1.8" cy="7.8" r="0.8" fill="#d0d0d0"/></svg><div style="left:97.5px;top:139.3px;width:55px;height:19.3px;background:#474747;border:1px solid #707070;border-radius:3px;"></div><svg style="left:101.5px;top:143.5px;" width="11" height="12" viewBox="0 0 11 12"><path d="M0.8 0.8l8.8 10.6M9.6 0.8l-8.8 10.6" stroke="#b5504d" stroke-width="1.25"/></svg><svg style="left:120px;top:144px;" width="12" height="12" viewBox="0 0 12 12"><path d="M0.6 6.6l3.6 4.4 6.8-10" fill="none" stroke="#5f9474" stroke-width="1.25"/></svg><span class="t" style="left:138.30px;top:143px;font-size:12.5px;color:#e0e0e0;transform:scaleX(0.9714);font-weight:bold;font-style:italic;font-family:'Liberation Serif',serif;">f</span><span class="t" style="left:143.75px;top:145px;font-size:10.5px;color:#e0e0e0;transform:scaleX(0.9246);font-weight:bold;font-style:italic;font-family:'Liberation Serif',serif;">x</span><div style="left:156.5px;top:139.3px;width:861.5px;height:19.3px;background:#484848;border:1px solid #707070;border-radius:3px;"></div><span class="t" style="left:165.00px;top:145px;font-size:10px;color:#ffffff;transform:scaleX(0.8889);font-weight:bold;">=</span><svg style="left:1006.6px;top:146.9px;" width="8" height="5" viewBox="0 0 8 5"><path d="M1 1l3.0 3 3.0 -3" fill="none" stroke="#dcdcdc" stroke-width="1.1" stroke-linecap="round" stroke-linejoin="round"/></svg></section>
<main id="grid"><div style="left:0px;top:160px;width:1024px;height:31.3px;background:#2f3030;"></div><div style="left:0px;top:191px;width:38px;height:540px;background:#2f3030;"></div><div style="left:38px;top:191.3px;width:970px;height:538.5px;background:#fff;"></div><div style="left:202px;top:164px;width:124px;height:27.3px;background:#666666;"></div><div style="left:202px;top:189.6px;width:124px;height:1.6px;background:#1f7a4a;"></div><div style="left:37px;top:163px;width:1px;height:28px;background:#8a8a8a;"></div><div style="left:201.5px;top:163px;width:1px;height:28px;background:#8a8a8a;"></div><div style="left:325.0px;top:163px;width:1px;height:28px;background:#8a8a8a;"></div><div style="left:416.5px;top:163px;width:1px;height:28px;background:#8a8a8a;"></div><div style="left:508.0px;top:163px;width:1px;height:28px;background:#8a8a8a;"></div><div style="left:599.5px;top:163px;width:1px;height:28px;background:#8a8a8a;"></div><div style="left:691.0px;top:163px;width:1px;height:28px;background:#8a8a8a;"></div><div style="left:782.5px;top:163px;width:1px;height:28px;background:#8a8a8a;"></div><div style="left:874.0px;top:163px;width:1px;height:28px;background:#8a8a8a;"></div><div style="left:965.2px;top:163px;width:1px;height:28px;background:#8a8a8a;"></div><span class="t" style="left:113.60px;top:171px;font-size:17px;color:#fff;">A</span><span class="t" style="left:258.05px;top:171px;font-size:17px;color:#fff;">B</span><span class="t" style="left:364.58px;top:171px;font-size:17px;color:#fff;">C</span><span class="t" style="left:456.88px;top:171px;font-size:17px;color:#fff;">D</span><span class="t" style="left:548.15px;top:171px;font-size:17px;color:#fff;">E</span><span class="t" style="left:640.82px;top:171px;font-size:17px;color:#fff;">F</span><span class="t" style="left:730.67px;top:171px;font-size:17px;color:#fff;">G</span><span class="t" style="left:822.88px;top:171px;font-size:17px;color:#fff;">H</span><span class="t" style="left:917.62px;top:171px;font-size:17px;color:#fff;">I</span><svg style="left:0px;top:160px;" width="38" height="32" viewBox="0 0 38 32"><polygon points="14,29 35,8 35,29" fill="#e6e6e6"/></svg><div style="left:0px;top:190.7px;width:38px;height:1px;background:#9a9a9a;"></div><div style="left:201.5px;top:191.3px;width:1px;height:538.5px;background:#e9e9e9;"></div><div style="left:325.0px;top:191.3px;width:1px;height:538.5px;background:#e9e9e9;"></div><div style="left:416.5px;top:191.3px;width:1px;height:538.5px;background:#e9e9e9;"></div><div style="left:508.0px;top:191.3px;width:1px;height:538.5px;background:#e9e9e9;"></div><div style="left:599.5px;top:191.3px;width:1px;height:538.5px;background:#e9e9e9;"></div><div style="left:691.0px;top:191.3px;width:1px;height:538.5px;background:#e9e9e9;"></div><div style="left:782.5px;top:191.3px;width:1px;height:538.5px;background:#e9e9e9;"></div><div style="left:874.0px;top:191.3px;width:1px;height:538.5px;background:#e9e9e9;"></div><div style="left:965.2px;top:191.3px;width:1px;height:538.5px;background:#e9e9e9;"></div><div style="left:38px;top:268.3px;width:970px;height:1px;background:#e9e9e9;"></div><div style="left:0px;top:268.2px;width:38px;height:1.2px;background:#9a9a9a;"></div><div style="left:38px;top:296.83000000000004px;width:970px;height:1px;background:#e9e9e9;"></div><div style="left:0px;top:296.73px;width:38px;height:1.2px;background:#9a9a9a;"></div><div style="left:38px;top:325.36px;width:970px;height:1px;background:#e9e9e9;"></div><div style="left:0px;top:325.26px;width:38px;height:1.2px;background:#9a9a9a;"></div><div style="left:38px;top:353.89px;width:970px;height:1px;background:#e9e9e9;"></div><div style="left:0px;top:353.78999999999996px;width:38px;height:1.2px;background:#9a9a9a;"></div><div style="left:38px;top:382.42px;width:970px;height:1px;background:#e9e9e9;"></div><div style="left:0px;top:382.32px;width:38px;height:1.2px;background:#9a9a9a;"></div><div style="left:38px;top:410.95000000000005px;width:970px;height:1px;background:#e9e9e9;"></div><div style="left:0px;top:410.85px;width:38px;height:1.2px;background:#9a9a9a;"></div><div style="left:38px;top:439.48px;width:970px;height:1px;background:#e9e9e9;"></div><div style="left:0px;top:439.38px;width:38px;height:1.2px;background:#9a9a9a;"></div><div style="left:38px;top:468.01px;width:970px;height:1px;background:#e9e9e9;"></div><div style="left:0px;top:467.90999999999997px;width:38px;height:1.2px;background:#9a9a9a;"></div><div style="left:38px;top:496.54px;width:970px;height:1px;background:#e9e9e9;"></div><div style="left:0px;top:496.44px;width:38px;height:1.2px;background:#9a9a9a;"></div><div style="left:38px;top:525.0699999999999px;width:970px;height:1px;background:#e9e9e9;"></div><div style="left:0px;top:524.9699999999999px;width:38px;height:1.2px;background:#9a9a9a;"></div><div style="left:38px;top:553.6px;width:970px;height:1px;background:#e9e9e9;"></div><div style="left:0px;top:553.5px;width:38px;height:1.2px;background:#9a9a9a;"></div><div style="left:38px;top:582.1300000000001px;width:970px;height:1px;background:#e9e9e9;"></div><div style="left:0px;top:582.0300000000001px;width:38px;height:1.2px;background:#9a9a9a;"></div><div style="left:38px;top:610.6600000000001px;width:970px;height:1px;background:#e9e9e9;"></div><div style="left:0px;top:610.5600000000001px;width:38px;height:1.2px;background:#9a9a9a;"></div><div style="left:38px;top:639.19px;width:970px;height:1px;background:#e9e9e9;"></div><div style="left:0px;top:639.09px;width:38px;height:1.2px;background:#9a9a9a;"></div><div style="left:38px;top:667.72px;width:970px;height:1px;background:#e9e9e9;"></div><div style="left:0px;top:667.62px;width:38px;height:1.2px;background:#9a9a9a;"></div><div style="left:38px;top:696.25px;width:970px;height:1px;background:#e9e9e9;"></div><div style="left:0px;top:696.15px;width:38px;height:1.2px;background:#9a9a9a;"></div><div style="left:38px;top:724.78px;width:970px;height:1px;background:#e9e9e9;"></div><div style="left:0px;top:724.68px;width:38px;height:1.2px;background:#9a9a9a;"></div><div style="left:320px;top:191.8px;width:12px;height:76.3px;background:#fff;"></div><div style="left:504px;top:269.40000000000003px;width:10px;height:27.330000000000002px;background:#fff;"></div><div style="left:0px;top:469.11px;width:38px;height:27.330000000000002px;background:#666666;border-right:1.5px solid #3f8560;"></div><span class="t" style="left:14.44px;top:247px;font-size:17.5px;color:#fff;">1</span><span class="t" style="left:14.44px;top:276px;font-size:17.5px;color:#fff;">2</span><span class="t" style="left:14.44px;top:304px;font-size:17.5px;color:#fff;">3</span><span class="t" style="left:14.44px;top:333px;font-size:17.5px;color:#fff;">4</span><span class="t" style="left:14.44px;top:362px;font-size:17.5px;color:#fff;">5</span><span class="t" style="left:14.44px;top:390px;font-size:17.5px;color:#fff;">6</span><span class="t" style="left:14.44px;top:419px;font-size:17.5px;color:#fff;">7</span><span class="t" style="left:14.44px;top:447px;font-size:17.5px;color:#fff;">8</span><span class="t" style="left:14.44px;top:476px;font-size:17.5px;color:#fff;">9</span><span class="t" style="left:9.59px;top:504px;font-size:17.5px;color:#fff;">10</span><span class="t" style="left:10.20px;top:533px;font-size:17.5px;color:#fff;">11</span><span class="t" style="left:9.59px;top:561px;font-size:17.5px;color:#fff;">12</span><span class="t" style="left:9.59px;top:590px;font-size:17.5px;color:#fff;">13</span><span class="t" style="left:9.59px;top:618px;font-size:17.5px;color:#fff;">14</span><span class="t" style="left:9.59px;top:647px;font-size:17.5px;color:#fff;">15</span><span class="t" style="left:9.59px;top:675px;font-size:17.5px;color:#fff;">16</span><span class="t" style="left:9.59px;top:704px;font-size:17.5px;color:#fff;">17</span><span class="t c" style="left:42.20px;top:274px;font-size:19px;color:#111;transform:scaleX(1.0285);">Department</span><span class="t c" style="left:42.20px;top:302px;font-size:19px;color:#111;transform:scaleX(1.0047);">Carpentry</span><span class="t c" style="left:42.20px;top:331px;font-size:19px;color:#111;transform:scaleX(0.9740);">Painting</span><span class="t c" style="left:42.20px;top:359px;font-size:19px;color:#111;transform:scaleX(1.0369);">Profit</span><span class="t c" style="left:42.20px;top:416px;font-size:19px;color:#111;transform:scaleX(1.0019);">Units of Tables</span><span class="t c" style="left:42.20px;top:445px;font-size:19px;color:#111;transform:scaleX(0.9804);">Units of Chairs</span><span class="t c" style="left:42.20px;top:473px;font-size:19px;color:#111;transform:scaleX(1.0017);">Carpentry Hours</span><span class="t c" style="left:42.20px;top:502px;font-size:19px;color:#111;transform:scaleX(0.9804);">Painting Hours</span><span class="t c" style="left:42.20px;top:530px;font-size:19px;color:#111;transform:scaleX(1.0369);">Profit</span><span class="t c" style="left:207.50px;top:217px;font-size:19px;color:#111;transform:scaleX(0.9939);">Hours Required to make</span><span class="t c" style="left:285.20px;top:246px;font-size:19px;color:#111;transform:scaleX(0.9962);">1 Unit</span><span class="t c" style="left:206.30px;top:274px;font-size:19px;color:#111;transform:scaleX(0.9689);">Tables</span><span class="t c" style="left:329.80px;top:274px;font-size:19px;color:#111;transform:scaleX(0.9324);">Chairs</span><span class="t c" style="left:420.60px;top:274px;font-size:19px;color:#111;transform:scaleX(0.9893);">Available Hours</span><span class="t c" style="left:312.60px;top:302px;font-size:19px;color:#111;transform:scaleX(0.9294);">4</span><span class="t c" style="left:312.20px;top:331px;font-size:19px;color:#111;transform:scaleX(0.9294);">2</span><span class="t c" style="left:312.20px;top:359px;font-size:19px;color:#111;transform:scaleX(0.9294);">7</span><span class="t c" style="left:403.10px;top:302px;font-size:19px;color:#111;transform:scaleX(0.9294);">3</span><span class="t c" style="left:402.70px;top:331px;font-size:19px;color:#111;transform:scaleX(0.9294);">1</span><span class="t c" style="left:402.90px;top:359px;font-size:19px;color:#111;transform:scaleX(0.9294);">5</span><span class="t c" style="left:474.00px;top:302px;font-size:19px;color:#111;transform:scaleX(0.9770);">240</span><span class="t c" style="left:474.00px;top:331px;font-size:19px;color:#111;transform:scaleX(0.9770);">100</span><span class="t c" style="left:312.20px;top:416px;font-size:19px;color:#111;transform:scaleX(0.9294);">1</span><span class="t c" style="left:312.20px;top:445px;font-size:19px;color:#111;transform:scaleX(0.9294);">1</span><div style="left:200.6px;top:466.9px;width:126.6px;height:31.1px;border:2px solid #4a8669;background:#fff;"></div><div style="left:323.6px;top:494.8px;width:4.4px;height:4.6px;background:#fff;"></div><div style="left:324.6px;top:495.8px;width:3.2px;height:3.4px;background:#35775a;"></div><span class="t c" style="left:205.80px;top:473px;font-size:20px;color:#111;transform:scaleX(0.7863);">=</span><div style="left:216.1px;top:468.9px;width:1px;height:26.8px;background:#222;"></div><svg style="left:290px;top:478px;" width="8" height="14" viewBox="0 0 8 14"><path d="M1.5 1.2h1.6l0.65 0.6 0.65-0.6h1.6M3.75 1.8v10.4M1.5 12.8h1.6l0.65-0.6 0.65 0.6h1.6" fill="none" stroke="#2a2a2a" stroke-width="0.95"/></svg><div style="left:1008px;top:160px;width:16px;height:590px;background:#3b3b3b;"></div><div style="left:1013.1px;top:177px;width:6.5px;height:470.4px;background:#c6c6c6;border-radius:3.2px;"></div><svg style="left:1008px;top:160px;" width="16" height="16" viewBox="0 0 16 16"><polygon points="8,8 11.2,12.2 4.8,12.2" fill="#d8d8d8"/></svg><svg style="left:1008px;top:718px;" width="16" height="16" viewBox="0 0 16 16"><polygon points="5,5.2 11.6,5.2 8.3,10.2" fill="#d8d8d8"/></svg></main>
<footer id="bottom"><div style="left:0px;top:729.8px;width:1008px;height:21px;background:#272d33;"></div><div style="left:12px;top:729.8px;width:154px;height:21px;background:#5e5e5e;"></div><div style="left:623.7px;top:729.8px;width:384.3px;height:21.4px;background:#3b3b3b;"></div><div style="left:0px;top:751.2px;width:1024px;height:16.8px;background:#343434;"></div><div style="left:0px;top:766.5px;width:1024px;height:1.5px;background:#cfcfcf;"></div><div style="left:75.3px;top:729.8px;width:48.2px;height:20.4px;background:#fff;border-bottom:2.8px solid #1e7145;"></div><span class="t" style="left:84.00px;top:735px;font-size:10px;color:#1e7145;transform:scaleX(0.9634);font-weight:bold;">Sheet1</span><svg style="left:12px;top:730px;" width="60" height="20" viewBox="0 0 60 20"><polygon points="8,10 12,7 12,13" fill="#8a8a8a"/><polygon points="33,10 29,7 29,13" fill="#9a9a9a"/></svg><svg style="left:146px;top:732px;" width="16" height="16" viewBox="0 0 16 16"><circle cx="8" cy="8" r="5.8" fill="none" stroke="#fff" stroke-width="1.3"/><path d="M8 5v6M5 8h6" stroke="#fff" stroke-width="1.3"/></svg><svg style="left:608px;top:731px;" width="30" height="20" viewBox="0 0 30 20"><circle cx="6.6" cy="6.8" r="0.85" fill="#ddd"/><circle cx="6.6" cy="9.8" r="0.85" fill="#ddd"/><circle cx="6.6" cy="12.8" r="0.85" fill="#ddd"/><polygon points="20.6,8.8 26,5.6 26,12" fill="#ddd"/></svg><div style="left:637.9px;top:736.5px;width:322.8px;height:6.6px;background:#c8c8c8;border-radius:3.3px;"></div><svg style="left:998px;top:732px;" width="12" height="16" viewBox="0 0 12 16"><polygon points="3.4,4.8 8.4,8.2 3.4,11.6" fill="#ddd"/></svg><svg style="left:808px;top:753px;" width="12" height="11" viewBox="0 0 12 11"><rect x="0.5" y="0.5" width="10.6" height="10" fill="none" stroke="#868686" stroke-width="0.9"/><path d="M4 0.5v10M7.6 0.5v10M0.5 3.8h10.6M0.5 7.2h10.6" stroke="#868686" stroke-width="0.8"/></svg><svg style="left:839px;top:753px;" width="11" height="11" viewBox="0 0 11 11"><rect x="0.5" y="0.5" width="9.6" height="10" fill="none" stroke="#868686" stroke-width="0.9"/><rect x="3" y="3" width="4.6" height="7.5" fill="none" stroke="#868686" stroke-width="0.8"/></svg><svg style="left:868.4px;top:753px;" width="12" height="11" viewBox="0 0 12 11"><path d="M0.5 3.6v6.9h10.8v-10h-3.4" fill="none" stroke="#868686" stroke-width="0.9"/><path d="M0.5 3.6h3.6v-3.1M4.1 0.5h3.8v4.6h-3.8" fill="none" stroke="#868686" stroke-width="0.8"/></svg><div style="left:892px;top:758px;width:7.4px;height:1px;background:#6a6a6a;"></div><div style="left:903px;top:758.8px;width:75.6px;height:1.1px;background:#a2a2a2;"></div><div style="left:940.6px;top:755px;width:1.3px;height:7.8px;background:#a2a2a2;"></div><div style="left:982px;top:758px;width:6.6px;height:1px;background:#6a6a6a;"></div><div style="left:984.8px;top:755.2px;width:1px;height:6.6px;background:#6a6a6a;"></div><span class="t" style="left:999.70px;top:755px;font-size:9px;color:#727272;transform:scaleX(0.7769);">190%</span><span class="t" style="left:6.80px;top:755px;font-size:9.3px;color:#fff;transform:scaleX(0.8458);">Enter</span><span class="t" style="left:57.60px;top:755px;font-size:9.3px;color:#fff;transform:scaleX(0.9270);">Accessibility: Good to go</span><svg style="left:42.6px;top:753.4px;" width="13" height="13" viewBox="0 0 13 13"><circle cx="5.2" cy="1.6" r="1.15" fill="none" stroke="#f0f0f0" stroke-width="0.9"/><path d="M0.6 3.6c1.6 0.9 3 1.1 4.6 1.1s3-0.2 4.6-1.1" fill="none" stroke="#f0f0f0" stroke-width="1"/><path d="M3.7 4.8v3l-1.7 4M6.7 4.8v2.4" fill="none" stroke="#f0f0f0" stroke-width="1"/><path d="M5.6 9.6l1.9 1.9 3.8-4.3" fill="none" stroke="#f0f0f0" stroke-width="1.1"/></svg></footer>
</body></html>
